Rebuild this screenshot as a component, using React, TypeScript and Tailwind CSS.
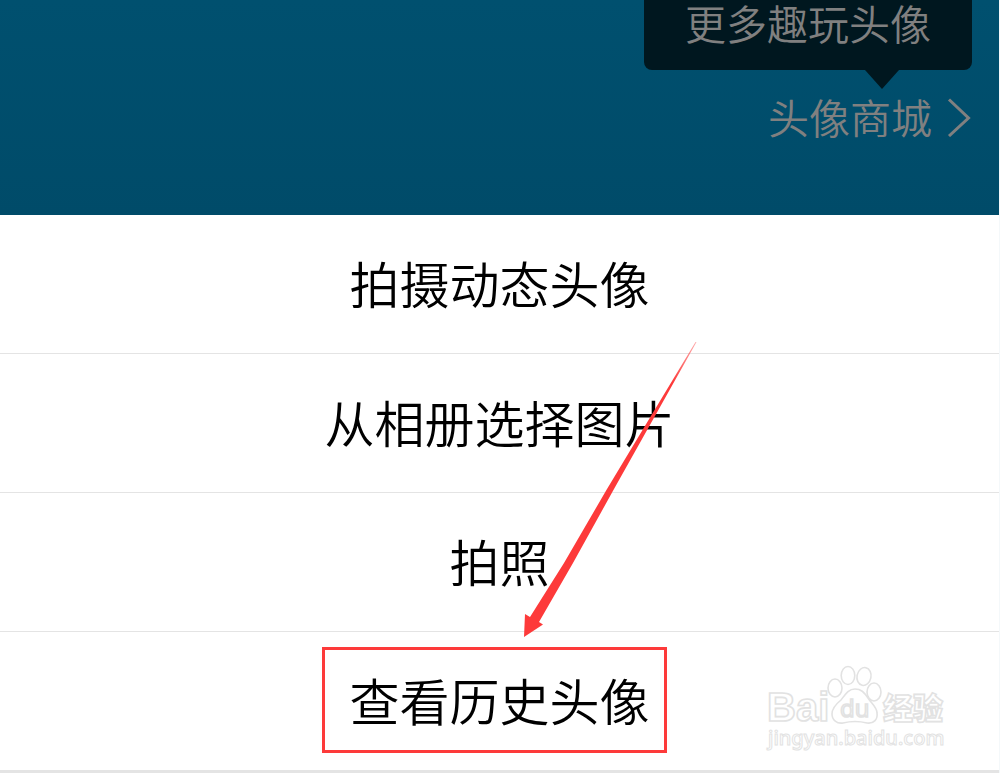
import React from "react";

const actions = ["拍摄动态头像", "从相册选择图片", "拍照", "查看历史头像"];
const highlighted = "查看历史头像";

function Callout() {
  return (
    <>
      <span className="pointer-events-none absolute -left-7 -right-[17px] top-[15px] bottom-[17px] border-3 border-[#fd3a3a]" />
      <svg
        className="pointer-events-none absolute bottom-[133px] left-[173px] h-[296px] w-[174px]"
        viewBox="0 0 174 296"
        aria-hidden="true"
      >
        <defs>
          <linearGradient id="tail" x1="174" y1="0" x2="150" y2="42" gradientUnits="userSpaceOnUse">
            <stop offset="0" stopColor="#fd3a3a" stopOpacity="0.4" />
            <stop offset="1" stopColor="#fd3a3a" />
          </linearGradient>
        </defs>
        <path d="M172.500 1 L84 148 L41 222 L7 276 L2 273 L1 296 L20 283.500 L16 281 L50 222 L91 148 L173.500 1 Z" fill="url(#tail)" />
      </svg>
    </>
  );
}

function Watermark() {
  return (
    <svg
      className="pointer-events-none absolute right-12 bottom-4 h-[92px] w-[186px]"
      viewBox="0 0 186 92"
      role="img"
      aria-label="Baidu 经验"
    >
      <g fill="#fff" stroke="#e2e2e2" strokeWidth="1.600">
        <text x="2" y="59" fontFamily="Liberation Sans, Arial, sans-serif" fontWeight="700" fontSize="40">
          Bai
        </text>
        <ellipse cx="70" cy="26" rx="7" ry="9" />
        <ellipse cx="83" cy="13.500" rx="6.800" ry="9" />
        <ellipse cx="99" cy="14.500" rx="7" ry="9" transform="rotate(12 99 14.500)" />
        <ellipse cx="109" cy="30" rx="7" ry="9" />
        <path d="M90 27 C83 27 80 33 76 38 C71 42 67 46 67 52 C67 58 72 62 78 61 C86 59 94 59 102 61 C109 62 113 57 112 51 C112 45 106 41 103 36 C99 30 96 27 90 27 Z" />
        <text x="75" y="55" fontFamily="Open Sans, Noto Sans, sans-serif" fontWeight="500" fontSize="24">
          du
        </text>
        <text x="118" y="57" fontFamily="Noto Sans CJK SC, sans-serif" fontWeight="900" fontSize="30">
          经验
        </text>
        <text x="3" y="83" fontFamily="Noto Sans, Open Sans, sans-serif" fontWeight="500" fontSize="20" strokeWidth="1">
          jingyan.baidu.com
        </text>
      </g>
    </svg>
  );
}

export default function App() {
  return (
    <main className="min-h-screen bg-[#f4f8fa] pr-px font-['Noto_Sans_CJK_SC',sans-serif] font-[350]">
      <header className="flex h-[215px] flex-col items-end bg-linear-to-b from-[#00506f] to-[#004b69] pr-[27px] text-[41px] leading-[44px] text-[#808080]">
        <div className="relative h-[70px] rounded-b-lg bg-[#00171f] px-[41px]">
          <p>更多趣玩头像</p>
          <svg className="absolute top-full right-[73px] h-[19px] w-[34px]" viewBox="0 0 34 19" aria-hidden="true">
            <path d="M0 0 H34 L17 19 Z" fill="#00171f" />
          </svg>
        </div>
        <a href="#store" className="mt-6 flex items-center gap-3">
          头像商城
          <svg className="h-[42px] w-7" viewBox="0 0 28 42" fill="none" stroke="#808080" strokeWidth="3" aria-hidden="true">
            <path d="M5 4.500 L24.500 23 L5 41" />
          </svg>
        </a>
      </header>
      <ul className="bg-white text-black">
        {actions.map((label, i) => (
          <li
            key={label}
            className={
              i < actions.length - 1
                ? "border-b border-[#e4e4e4]"
                : "relative border-b-3 border-[#e4e4e4]"
            }
          >
            <button type="button" className="flex h-[138px] w-full items-center justify-center text-[50px]">
              <span className="relative flex h-full items-center pb-1 whitespace-nowrap">
                {label}
                {label === highlighted && <Callout />}
              </span>
            </button>
            {i === actions.length - 1 && <Watermark />}
          </li>
        ))}
      </ul>
    </main>
  );
}
